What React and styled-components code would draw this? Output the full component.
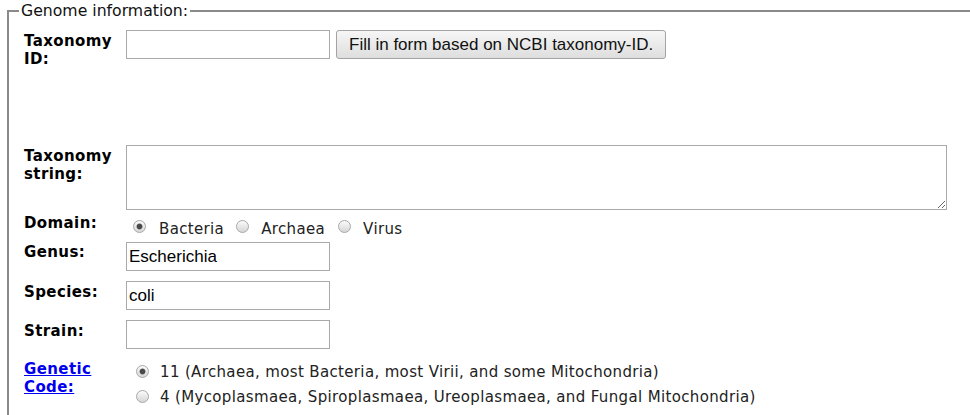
import React from "react";
import styled, { createGlobalStyle } from "styled-components";

const Global = createGlobalStyle`
  html, body { margin: 0; padding: 0; background: #fff; overflow: hidden; }
  body { font-family: "DejaVu Sans", Verdana, sans-serif; color: #000; }
`;

const Fieldset = styled.fieldset`
  margin: 0 0 0 7px;
  width: 1000px;
  border: 2px solid #8a8a8a;
  padding: 8px 0 10px 15px;
  min-inline-size: 0;
`;

const Legend = styled.legend`
  font-family: "DejaVu Sans", Verdana, sans-serif;
  font-size: 15.7px;
  line-height: 22px;
  color: #111;
  padding: 0 2px;
  margin-left: -5px;
`;

const Row = styled.div`
  display: grid;
  grid-template-columns: 102px auto;
  align-items: start;
  margin-top: ${(p) => p.$top || 0}px;
`;

const Label = styled.div`
  font-weight: bold;
  font-size: 15px;
  letter-spacing: 0.4px;
  line-height: 18px;
  padding-top: ${(p) => p.$pt || 0}px;
  color: #000;
`;

const LinkLabel = styled.a`
  color: #0000ee;
  text-decoration: underline;
  cursor: pointer;
`;

const Controls = styled.div`
  display: flex;
  align-items: flex-start;
  gap: 6px;
  padding-top: ${(p) => p.$pt || 0}px;
`;

const TextInput = styled.input`
  box-sizing: border-box;
  width: 204px;
  height: 29px;
  margin: 0;
  padding: 1px 2px;
  border: 1px solid #a9a9a9;
  border-radius: 0;
  font-family: "Liberation Sans", Arial, sans-serif;
  font-size: 17px;
  color: #000;
  outline: none;
`;

const Button = styled.button`
  box-sizing: border-box;
  height: 29px;
  margin: 0;
  padding: 0 12px;
  border: 1px solid #a3a3a3;
  border-radius: 3px;
  background: linear-gradient(#f6f6f6, #dedede);
  font-family: "Liberation Sans", Arial, sans-serif;
  font-size: 17px;
  color: #111;
`;

const TextArea = styled.textarea`
  box-sizing: border-box;
  width: 821px;
  height: 65px;
  margin: 0;
  border: 1px solid #a9a9a9;
  border-radius: 0;
  font-family: "Liberation Mono", monospace;
  outline: none;
`;

const RadioGroup = styled.div`
  display: flex;
  flex-direction: ${(p) => (p.$column ? "column" : "row")};
  padding-top: ${(p) => p.$pt || 0}px;
  padding-left: ${(p) => p.$indent || 0}px;
`;

const Option = styled.label`
  display: flex;
  align-items: flex-start;
  font-size: 15px;
  letter-spacing: 0.35px;
  line-height: ${(p) => p.$lh || 18}px;
  color: #222;
  margin-right: ${(p) => p.$after || 0}px;
  white-space: nowrap;
`;

const Radio = styled.input.attrs({ type: "radio" })`
  appearance: none;
  -webkit-appearance: none;
  box-sizing: border-box;
  flex: none;
  width: 13px;
  height: 13px;
  margin: ${(p) => p.$mt || 0}px ${(p) => p.$gap || 12}px 0 0;
  border: 1px solid #a8a8a8;
  border-radius: 50%;
  background: linear-gradient(#fbfbfb, #d6d6d6);
  &:checked {
    background: radial-gradient(circle, #4a4a4a 0 2.4px, #8a8a8a 2.8px, transparent 3.4px),
      linear-gradient(#fbfbfb, #d6d6d6);
  }
`;

export default function App() {
  return (
    <>
      <Global />
      <Fieldset>
        <Legend>Genome information:</Legend>

        <Row>
          <Label $pt={2}>
            Taxonomy
            <br />
            ID:
          </Label>
          <Controls>
            <TextInput defaultValue="" />
            <Button type="button">Fill in form based on NCBI taxonomy-ID.</Button>
          </Controls>
        </Row>

        <Row $top={77}>
          <Label $pt={2}>
            Taxonomy
            <br />
            string:
          </Label>
          <TextArea defaultValue="" />
        </Row>

        <Row $top={1}>
          <Label $pt={3}>Domain:</Label>
          <RadioGroup $pt={9} $indent={7}>
            <Option $after={12}>
              <Radio name="domain" defaultChecked $gap={13} />
              Bacteria
            </Option>
            <Option $after={13}>
              <Radio name="domain" $gap={12} />
              Archaea
            </Option>
            <Option>
              <Radio name="domain" $gap={12} />
              Virus
            </Option>
          </RadioGroup>
        </Row>

        <Row $top={4}>
          <Label $pt={1}>Genus:</Label>
          <TextInput defaultValue="Escherichia" />
        </Row>

        <Row $top={10}>
          <Label $pt={2}>Species:</Label>
          <TextInput defaultValue="coli" />
        </Row>

        <Row $top={10}>
          <Label $pt={2}>Strain:</Label>
          <TextInput defaultValue="" />
        </Row>

        <Row $top={11}>
          <Label>
            <LinkLabel>
              Genetic
              <br />
              Code:
            </LinkLabel>
          </Label>
          <RadioGroup $column $indent={10}>
            <Option $lh={25}>
              <Radio name="code" defaultChecked $mt={5} $gap={11} />
              11 (Archaea, most Bacteria, most Virii, and some Mitochondria)
            </Option>
            <Option $lh={25}>
              <Radio name="code" $mt={5} $gap={11} />
              4 (Mycoplasmaea, Spiroplasmaea, Ureoplasmaea, and Fungal Mitochondria)
            </Option>
          </RadioGroup>
        </Row>
      </Fieldset>
    </>
  );
}
